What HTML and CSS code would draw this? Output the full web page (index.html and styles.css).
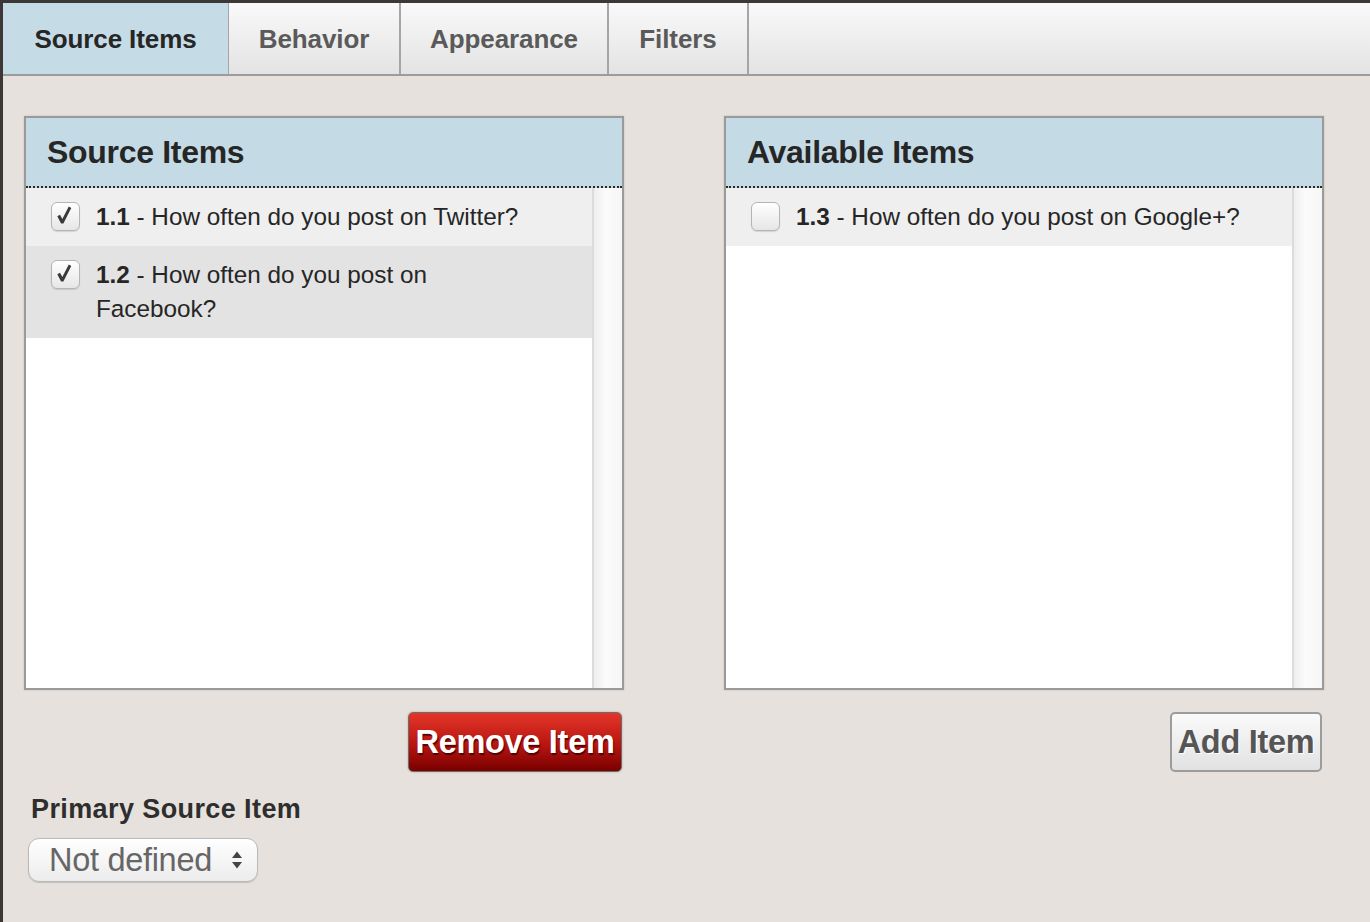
FILE: index.html
```html
<!DOCTYPE html>
<html>
<head>
<meta charset="utf-8">
<link rel="stylesheet" href="styles.css">
</head>
<body>
<div class="frame">
  <nav class="tabs">
    <div class="tab active">Source Items</div>
    <div class="tab">Behavior</div>
    <div class="tab">Appearance</div>
    <div class="tab">Filters</div>
  </nav>
  <main class="content">
    <div class="columns">
      <section class="col">
        <div class="panel">
          <div class="panel-head">Source Items</div>
          <div class="panel-body">
            <ul class="list">
              <li class="row row-a">
                <span class="cb"><svg viewBox="0 0 28 28" width="28" height="28"><path d="M5.5 13.2 L8.3 11.6 L10.7 16 L17.4 3.2 L20 4.6 L11.8 20.8 L9.4 20.8 Z" fill="#3a3a3a"/></svg></span>
                <span class="txt"><b>1.1</b> - How often do you post on Twitter?</span>
              </li>
              <li class="row row-b">
                <span class="cb"><svg viewBox="0 0 28 28" width="28" height="28"><path d="M5.5 13.2 L8.3 11.6 L10.7 16 L17.4 3.2 L20 4.6 L11.8 20.8 L9.4 20.8 Z" fill="#3a3a3a"/></svg></span>
                <span class="txt"><b>1.2</b> - How often do you post on<br>Facebook?</span>
              </li>
            </ul>
            <div class="scroll"></div>
          </div>
        </div>
        <div class="actions">
          <button class="btn btn-red">Remove Item</button>
        </div>
      </section>
      <section class="col">
        <div class="panel">
          <div class="panel-head">Available Items</div>
          <div class="panel-body">
            <ul class="list">
              <li class="row row-a">
                <span class="cb"></span>
                <span class="txt"><b>1.3</b> - How often do you post on Google+?</span>
              </li>
            </ul>
            <div class="scroll"></div>
          </div>
        </div>
        <div class="actions">
          <button class="btn btn-grey">Add Item</button>
        </div>
      </section>
    </div>
    <div class="primary">
      <div class="primary-label">Primary Source Item</div>
      <div class="select">
        <span class="select-text">Not defined</span>
        <svg class="select-arrows" viewBox="0 0 12 20" width="12" height="20"><path d="M6 1.5 L11 8 L1 8 Z M6 18.5 L11 12 L1 12 Z" fill="#444"/></svg>
      </div>
    </div>
  </main>
</div>
</body>
</html>
```
FILE: styles.css
```css
html, body {
  margin: 0;
  padding: 0;
  height: 100%;
}
body {
  font-family: "Liberation Sans", Arial, sans-serif;
  background: #e6e1dc;
  color: #222;
}
.frame {
  min-height: 922px;
  border-top: 3px solid #3d3835;
  border-left: 3px solid #3d3835;
  background: #e6e1dc;
  box-sizing: border-box;
}
.tabs {
  display: flex;
  height: 71px;
  background: linear-gradient(#f9f9f9, #e3e3e3);
  border-bottom: 2px solid #9c9c9c;
}
.tab {
  display: flex;
  align-items: center;
  justify-content: center;
  font-size: 26px;
  font-weight: bold;
  color: #5a5a5a;
  border-right: 2px solid #a5a5a5;
  letter-spacing: -0.1px;
  padding-top: 2px;
  box-sizing: border-box;
}
.tab:nth-child(2) { width: 172px; }
.tab:nth-child(3) { width: 208px; }
.tab:nth-child(4) { width: 140px; }
.tab.active {
  width: 226px;
  background: #c5dce6;
  color: #262626;
  border-right: 1px solid #a5a5a5;
}
.content {
  padding: 40px 0 0 21px;
}
.columns {
  display: flex;
  gap: 100px;
}
.col {
  width: 600px;
}
.panel {
  height: 574px;
  border: 2px solid #9a9a9a;
  box-sizing: border-box;
  background: #fff;
  display: flex;
  flex-direction: column;
  box-shadow: 0 0 2px rgba(0,0,0,0.15);
}
.panel-head {
  height: 68px;
  flex: none;
  background: #c4dbe6;
  border-bottom: 2px dotted #2a2620;
  font-size: 32px;
  font-weight: bold;
  color: #262626;
  display: flex;
  align-items: center;
  padding-left: 21px;
  letter-spacing: -0.3px;
}
.panel-body {
  flex: 1;
  display: flex;
}
.list {
  list-style: none;
  margin: 0;
  padding: 0;
  flex: 1;
}
.row {
  display: flex;
  align-items: flex-start;
  padding: 12px 0 12px 25px;
  font-size: 24.3px;
  line-height: 34px;
  color: #262626;
}
.row-a { background: #efefef; }
.row-b { background: #e3e3e3; }
.cb {
  width: 29px;
  height: 29px;
  margin-top: 2px;
  margin-right: 16px;
  flex: none;
  box-sizing: border-box;
  border: 1px solid #b5b5b5;
  border-radius: 6px;
  background: linear-gradient(#ffffff, #e6e6e6);
  box-shadow: 0 1px 1px rgba(0,0,0,0.12);
  display: flex;
  align-items: center;
  justify-content: center;
}
.cb svg { display: block; }
.txt b { font-weight: bold; }
.scroll {
  width: 28px;
  flex: none;
  border-left: 2px solid #dcdcdc;
  background: linear-gradient(90deg, #eeeeee, #fbfbfb 40%, #f6f6f6);
}
.actions {
  display: flex;
  justify-content: flex-end;
  padding-right: 2px;
  margin-top: 22px;
}
.btn {
  font-family: "Liberation Sans", Arial, sans-serif;
  font-weight: bold;
  font-size: 32.5px;
  height: 60px;
  border-radius: 5px;
  padding: 0;
  letter-spacing: -0.3px;
  cursor: pointer;
}
.btn-red {
  width: 214px;
  color: #fff;
  background: linear-gradient(#e3362a, #b81510 55%, #780000);
  border: 1px solid #6c6c6c;
  text-shadow: 1px 2px 1px rgba(60,0,0,0.8);
  box-shadow: 0 0 2px rgba(0,0,0,0.3);
}
.btn-grey {
  width: 152px;
  color: #555;
  background: linear-gradient(#fafafa, #e2e2e2);
  border: 2px solid #9c9c9c;
  text-shadow: 1px 1px 0 #fff;
}
.primary {
  margin-top: 22px;
}
.primary-label {
  font-size: 27px;
  font-weight: bold;
  color: #2e2e2e;
  line-height: 30px;
  padding-left: 7px;
  letter-spacing: 0.4px;
}
.select {
  margin-top: 14px;
  margin-left: 4px;
  width: 230px;
  height: 44px;
  box-sizing: border-box;
  border: 1px solid #b9b9b9;
  border-radius: 11px;
  background: linear-gradient(#ffffff, #ececec);
  box-shadow: 0 1px 1px rgba(0,0,0,0.15);
  display: flex;
  align-items: center;
  padding-left: 20px;
}
.select-text {
  font-size: 32.5px;
  color: #666;
  flex: 1;
  letter-spacing: -0.3px;
}
.select-arrows {
  margin-right: 14px;
}
```
